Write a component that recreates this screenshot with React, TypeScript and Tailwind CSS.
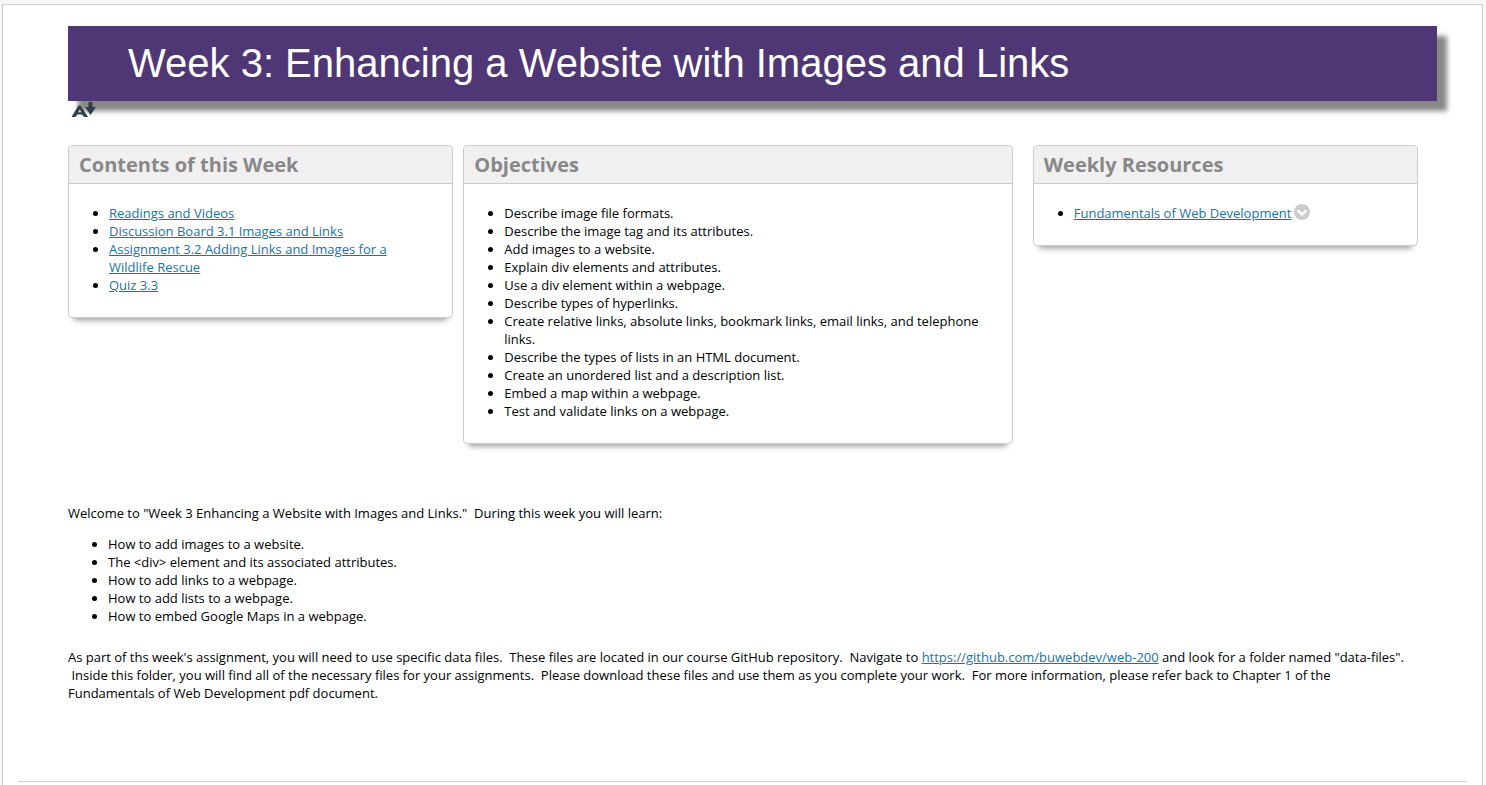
import type { ReactNode } from 'react';

const objectives = [
  'Describe image file formats.',
  'Describe the image tag and its attributes.',
  'Add images to a website.',
  'Explain div elements and attributes.',
  'Use a div element within a webpage.',
  'Describe types of hyperlinks.',
  'Create relative links, absolute links, bookmark links, email links, and telephone links.',
  'Describe the types of lists in an HTML document.',
  'Create an unordered list and a description list.',
  'Embed a map within a webpage.',
  'Test and validate links on a webpage.',
];

const contents = [
  'Readings and Videos',
  'Discussion Board 3.1 Images and Links',
  'Assignment 3.2 Adding Links and Images for a Wildlife Rescue',
  'Quiz 3.3',
];

const topics = [
  'How to add images to a website.',
  'The <div> element and its associated attributes.',
  'How to add links to a webpage.',
  'How to add lists to a webpage.',
  'How to embed Google Maps in a webpage.',
];

function TextLink({ href = '#', children }: { href?: string; children: ReactNode }) {
  return (
    <a href={href} className="text-[#1874a4] underline">
      {children}
    </a>
  );
}

function Panel({ title, className, children }: { title: string; className: string; children: ReactNode }) {
  return (
    <section
      className={`min-w-0 rounded border border-[#cccccc] bg-white shadow-[0_8px_6px_-6px_#999999] ${className}`}
    >
      <h2 className="rounded-t border-b border-[#cccccc] bg-[#f0f0f0] px-2.5 py-1 text-[20px] leading-[29px] font-bold text-[#888888]">
        {title}
      </h2>
      <ul className="list-disc pt-5 pr-5 pb-[23px] pl-10">{children}</ul>
    </section>
  );
}

function AlternativeFormatsIcon() {
  return (
    <svg width="26" height="16" viewBox="0 0 26 16" aria-hidden="true">
      <path
        fill="#2f3e48"
        fillRule="evenodd"
        d="M0.500 15 7.500 3.500h2L17 15h-4l-1.700-2.200c-1.800-.8-3.600-.8-5.200 0L4.500 15ZM7 10.500c1.200-.4 2.400-.4 3.600 0L8.800 7.300Z"
      />
      <path fill="#2f3e48" d="M17.500 0h4v5H25l-5.500 8L14 5h3.500Z" />
    </svg>
  );
}

export default function App() {
  return (
    <div className="flex min-h-screen flex-col bg-[#f8f8f8] pt-1 pr-[3px] pl-0.5 font-['Open_Sans',sans-serif] text-[13px] leading-[18px] text-black">
      <main className="grow border border-b-0 border-[#cccccc] bg-white pt-[21px]">
        <div className="pr-[45px] pl-[65px]">
          <h1 className="bg-[#4f3674] px-[60px] font-['Liberation_Sans',sans-serif] text-[40px] leading-[75px] text-white shadow-[10px_10px_5px_#888888]">
            Week 3: Enhancing a Website with Images and Links
          </h1>
          <button type="button" aria-label="Download alternative formats" className="relative ml-[3px] block pt-px">
            <AlternativeFormatsIcon />
          </button>

          <div className="mt-[27px] mr-[19px] flex items-start gap-2.5">
            <Panel title="Contents of this Week" className="flex-[7]">
              {contents.map((item) => (
                <li key={item}>
                  <TextLink>{item}</TextLink>
                </li>
              ))}
            </Panel>
            <Panel title="Objectives" className="flex-[10]">
              {objectives.map((item) => (
                <li key={item}>{item}</li>
              ))}
            </Panel>
            <Panel title="Weekly Resources" className="ml-2.5 flex-[7]">
              <li>
                <div className="flex items-center gap-[3px]">
                  <TextLink>Fundamentals of Web Development</TextLink>
                  <button type="button" aria-label="Open item menu" className="block pb-0.5">
                    <svg width="16" height="16" viewBox="0 0 16 16" aria-hidden="true">
                      <circle cx="8" cy="8" r="8" fill="#cccccc" />
                      <path d="m3.500 5 4.500 4.500L12.500 5" fill="none" stroke="#aaaaaa" strokeWidth="2" />
                      <path d="m3.500 6 4.500 4.500L12.500 6" fill="none" stroke="#ffffff" strokeWidth="2.500" />
                    </svg>
                  </button>
                </div>
              </li>
            </Panel>
          </div>

          <div className="pt-[60px]">
            <p>
              Welcome to "Week 3 Enhancing a Website with Images and Links."&nbsp; During this week you will learn:
            </p>
            <ul className="mt-[13px] list-disc pl-10">
              {topics.map((topic) => (
                <li key={topic}>{topic}</li>
              ))}
            </ul>
            <p className="mt-[23px] pr-6">
              As part of ths week's assignment, you will need to use specific data files.&nbsp; These files are located
              in our course GitHub repository.&nbsp; Navigate to{' '}
              <TextLink href="https://github.com/buwebdev/web-200">https://github.com/buwebdev/web-200</TextLink> and
              look for a folder named "data-files". &nbsp;Inside this folder, you will find all of the necessary files
              for your assignments.&nbsp; Please download these files and use them as you complete your work.&nbsp; For
              more information, please refer back to Chapter 1 of the Fundamentals of Web Development pdf document.
            </p>
          </div>
        </div>
        <hr className="mx-[15px] mt-[79px] border-[#cccccc]" />
      </main>
    </div>
  );
}
